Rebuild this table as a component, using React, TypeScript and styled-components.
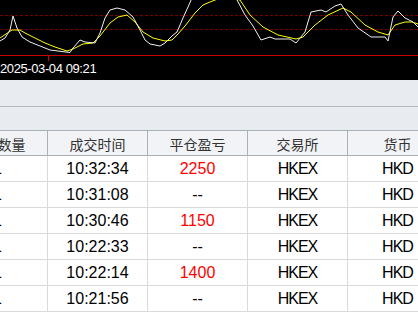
import React from "react";
import styled, { createGlobalStyle } from "styled-components";

const GlobalStyle = createGlobalStyle`
  html, body { margin: 0; padding: 0; background: #ffffff; overflow: hidden; }
  body { font-family: "Liberation Sans", Arial, sans-serif; }
`;

const Page = styled.div`
  width: 418px;
  height: 322px;
  overflow: hidden;
  display: flex;
  flex-direction: column;
  background: #ffffff;
`;

const ChartPanel = styled.div`
  height: 80px;
  background: #000000;
  display: flex;
  flex-direction: column;
  flex-shrink: 0;
`;

const PlotArea = styled.svg`
  display: block;
  width: 418px;
  height: 55px;
`;

const AxisBar = styled.div`
  position: relative;
  flex: 1;
  border-top: 1px solid #c80000;
  padding-top: 5px;
`;

const Tick = styled.div`
  position: absolute;
  left: 48px;
  top: 0;
  width: 1px;
  height: 5px;
  background: #d00000;
`;

const DateLabel = styled.div`
  color: #ffffff;
  font-family: "Liberation Sans", Arial, sans-serif;
  font-size: 13px;
  line-height: 15px;
  letter-spacing: -0.4px;
  white-space: nowrap;
`;

const Band = styled.div<{ $h: number; $line?: boolean }>`
  height: ${(p) => p.$h}px;
  flex-shrink: 0;
  background: #e8ebf0;
  border-bottom: ${(p) => (p.$line ? "1px solid #b3b8c0" : "none")};
`;

const Table = styled.div`
  display: grid;
  grid-template-columns: repeat(5, 100px);
  margin-left: -52px;
  width: 500px;
`;

const HeaderCell = styled.div`
  height: 24px;
  box-sizing: content-box;
  border-top: 1px solid #aab0b8;
  border-bottom: 1px solid #aab0b8;
  border-right: 1px solid #aab0b8;
  background: #f2f3f6;
  display: flex;
  align-items: center;
  justify-content: center;
  padding-top: 1px;
  height: 23px;
  font-family: "Noto Sans CJK SC", "Liberation Sans", sans-serif;
  font-size: 14px;
  color: #333333;
  white-space: nowrap;
`;

const Cell = styled.div<{ $tone?: "loss" | "plain"; $code?: boolean }>`
  height: 25px;
  border-bottom: 1px solid #dadada;
  border-right: 1px solid #dadada;
  display: flex;
  align-items: center;
  justify-content: center;
  font-family: "Liberation Sans", Arial, sans-serif;
  font-size: 16px;
  color: ${(p) => (p.$tone === "loss" ? "#ff0000" : "#000000")};
  letter-spacing: ${(p) => (p.$code ? "-1px" : "0")};
  white-space: nowrap;
`;

const headers = ["成交数量", "成交时间", "平仓盈亏", "交易所", "货币"];

const rows = [
  { qty: "1", time: "10:32:34", pnl: "2250" },
  { qty: "1", time: "10:31:08", pnl: "--" },
  { qty: "1", time: "10:30:46", pnl: "1150" },
  { qty: "1", time: "10:22:33", pnl: "--" },
  { qty: "1", time: "10:22:14", pnl: "1400" },
  { qty: "1", time: "10:21:56", pnl: "--" },
];

const whitePts =
  "0,41 5,38 10,30 13,16 17,28 22,37 30,42 40,46 50,50 62,51.5 70,52.5 73,48 80,40 85,42 95,43 100,33 105,18 110,10 117,8 125,10 133,17 140,30 145,40 150,44 160,46 165,43 172,36 177,32 183,18 188,7 192,-2 236,-2 245,15 253,26 261,40 270,37 275,39 290,39 296,43 305,32 311,12 321,10 326,12 335,6 341,4 348,15 358,28 371,37 385,37 388,41 393,17 398,11 405,18 413,22 418,27";

const yellowPts =
  "0,38 12,30 20,30 25,33 35,38 45,43 55,47 67,51 73,49 83,44 93,43 100,36 110,23 118,17 127,15 135,22 143,32 153,38 165,41 172,40 178,34 185,26 195,13 203,5 210,2 215,0 225,-3 240,0 250,15 263,27 278,35 296,39 303,37 315,25 328,15 343,8 351,12 365,25 378,32 388,35 395,25 405,22 412,22 418,24";

export default function App() {
  return (
    <>
      <GlobalStyle />
      <Page>
        <ChartPanel>
          <PlotArea viewBox="0 0 418 55">
            <line x1="0" y1="15.5" x2="418" y2="15.5" stroke="#7a0000" strokeWidth="1" strokeDasharray="3 2" />
            <line x1="0" y1="29.5" x2="418" y2="29.5" stroke="#7a0000" strokeWidth="1" strokeDasharray="3 2" />
            <polyline points={yellowPts} fill="none" stroke="#ffff00" strokeWidth="1" />
            <polyline points={whitePts} fill="none" stroke="#f0f0f0" strokeWidth="1" />
          </PlotArea>
          <AxisBar>
            <Tick />
            <DateLabel>2025-03-04 09:21</DateLabel>
          </AxisBar>
        </ChartPanel>
        <Band $h={26} $line />
        <Band $h={23} />
        <Table>
          {headers.map((h) => (
            <HeaderCell key={h}>{h}</HeaderCell>
          ))}
          {rows.map((r, i) => (
            <React.Fragment key={i}>
              <Cell>{r.qty}</Cell>
              <Cell>{r.time}</Cell>
              <Cell $tone={r.pnl === "--" ? "plain" : "loss"}>{r.pnl}</Cell>
              <Cell $code>HKEX</Cell>
              <Cell $code>HKD</Cell>
            </React.Fragment>
          ))}
        </Table>
      </Page>
    </>
  );
}
